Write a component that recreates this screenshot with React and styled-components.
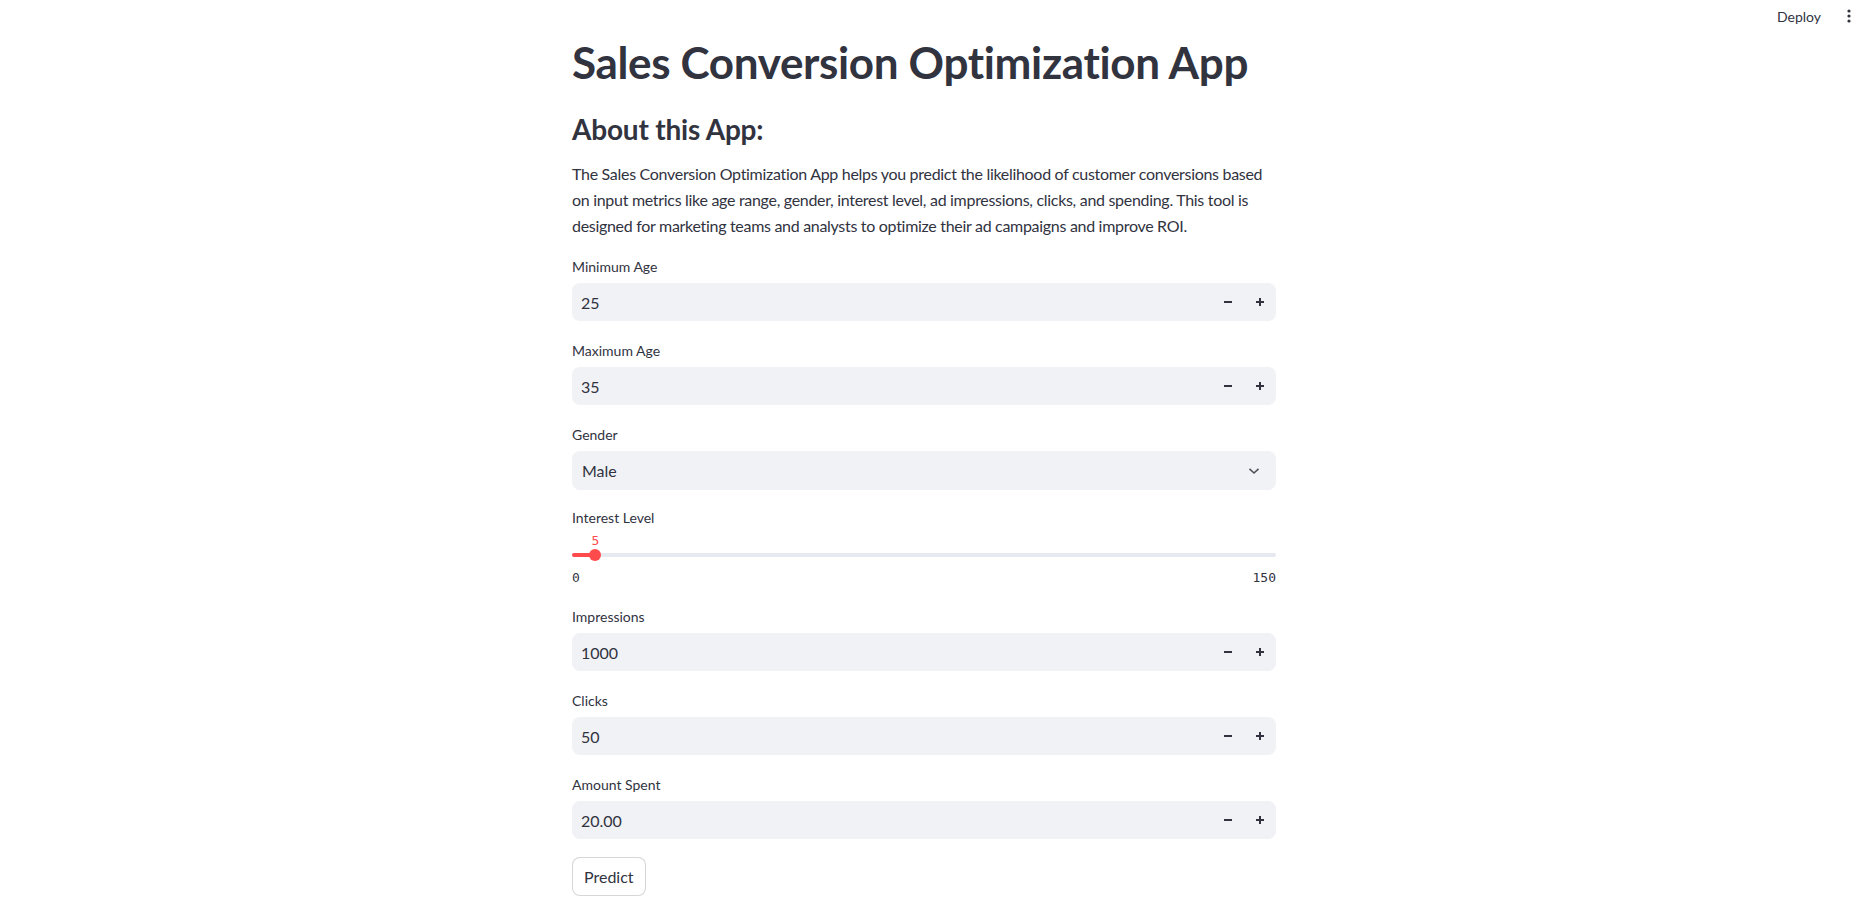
import React from "react";
import styled, { createGlobalStyle } from "styled-components";

const GlobalStyle = createGlobalStyle`
  body {
    margin: 0;
    background: #ffffff;
    color: #31333f;
    font-family: Lato, "Noto Sans", sans-serif;
  }
`;

const Header = styled.header`
  height: 32px;
  display: flex;
  justify-content: flex-end;
  align-items: center;
  padding-right: 19px;
`;

const Toolbar = styled.div`
  display: flex;
  align-items: center;
  gap: 8px;
`;

const DeployButton = styled.button`
  border: none;
  background: transparent;
  font-family: inherit;
  font-size: 14px;
  color: #31333f;
  padding: 0 12px;
  height: 28px;
  cursor: pointer;
`;

const MenuButton = styled.button`
  border: none;
  background: transparent;
  width: 16px;
  height: 28px;
  padding: 0;
  display: flex;
  align-items: center;
  justify-content: center;
  color: #31333f;
`;

const Main = styled.main`
  display: flex;
  justify-content: center;
  padding: 4px 28px 0 0;
`;

const Column = styled.div`
  width: 704px;
  display: flex;
  flex-direction: column;
`;

const Title = styled.h1`
  margin: 0;
  font-size: 44px;
  line-height: 53px;
  font-weight: 700;
  letter-spacing: -0.35px;
`;

const Subheader = styled.h3`
  margin: 23px 0 0;
  font-size: 28px;
  line-height: 34px;
  font-weight: 700;
  letter-spacing: -0.2px;
`;

const Paragraph = styled.p`
  margin: 15px 0 0;
  font-size: 16px;
  line-height: 26px;
  letter-spacing: -0.3px;
`;

const Form = styled.div`
  margin-top: 16px;
  display: flex;
  flex-direction: column;
  gap: 16px;
`;

const Field = styled.div`
  display: flex;
  flex-direction: column;
  gap: ${(p) => (p.$tight ? "0" : "4px")};
`;

const Label = styled.label`
  font-size: 14px;
  line-height: 24px;
  height: 24px;
`;

const NumberBox = styled.div`
  height: 38px;
  margin-bottom: 2px;
  background: #f0f2f6;
  border-radius: 8px;
  display: flex;
  align-items: center;
`;

const NumberValue = styled.div`
  flex: 1;
  padding-left: 9px;
  font-size: 16px;
`;

const StepButton = styled.button`
  width: 32px;
  height: 100%;
  border: none;
  background: transparent;
  padding: 0;
  display: flex;
  align-items: center;
  justify-content: center;
  color: #31333f;
`;

const SelectBox = styled.div`
  height: 39px;
  background: #f0f2f6;
  border-radius: 8px;
  display: flex;
  align-items: center;
  justify-content: space-between;
  padding: 0 16px 0 10px;
  font-size: 16px;
`;

const ValueRow = styled.div`
  position: relative;
  height: 16px;
  margin-top: 3px;
`;

const ThumbValue = styled.span`
  position: absolute;
  top: 0;
  transform: translateX(-50%);
  font-family: "DejaVu Sans Mono", monospace;
  font-size: 13px;
  line-height: 16px;
  color: #ff4b4b;
`;

const TrackWrap = styled.div`
  position: relative;
  height: 12px;
  display: flex;
  align-items: center;
`;

const Track = styled.div`
  width: 100%;
  height: 4px;
  border-radius: 2px;
  background: #e6e9ef;
  overflow: hidden;
`;

const TrackFill = styled.div`
  height: 100%;
  background: #ff4b4b;
`;

const Thumb = styled.div`
  position: absolute;
  top: 0;
  width: 12px;
  height: 12px;
  border-radius: 50%;
  background: #ff4b4b;
  transform: translateX(-50%);
`;

const Ticks = styled.div`
  margin-top: 9px;
  margin-bottom: 3px;
  display: flex;
  justify-content: space-between;
  font-family: "DejaVu Sans Mono", monospace;
  font-size: 13px;
  line-height: 16px;
`;

const PredictButton = styled.button`
  align-self: flex-start;
  height: 39px;
  padding: 0 11px;
  border: 1px solid rgba(49, 51, 63, 0.2);
  border-radius: 8px;
  background: #ffffff;
  font-family: inherit;
  font-size: 16px;
  color: #31333f;
  cursor: pointer;
`;

const MinusIcon = () => (
  <svg width="10" height="10" viewBox="0 0 10 10">
    <rect x="1" y="4" width="8" height="2" fill="currentColor" />
  </svg>
);

const PlusIcon = () => (
  <svg width="10" height="10" viewBox="0 0 10 10">
    <rect x="1" y="4" width="8" height="2" fill="currentColor" />
    <rect x="4" y="1" width="2" height="8" fill="currentColor" />
  </svg>
);

const ChevronIcon = () => (
  <svg width="12" height="8" viewBox="0 0 12 8">
    <path d="M1.5 1.8 L6 6 L10.5 1.8" fill="none" stroke="#50525c" strokeWidth="1.6" />
  </svg>
);

const KebabIcon = () => (
  <svg width="4" height="14" viewBox="0 0 4 14">
    <circle cx="2" cy="2" r="1.6" fill="currentColor" />
    <circle cx="2" cy="7" r="1.6" fill="currentColor" />
    <circle cx="2" cy="12" r="1.6" fill="currentColor" />
  </svg>
);

const NumberInput = ({ label, value }) => (
  <Field>
    <Label>{label}</Label>
    <NumberBox>
      <NumberValue>{value}</NumberValue>
      <StepButton aria-label="Decrement">
        <MinusIcon />
      </StepButton>
      <StepButton aria-label="Increment">
        <PlusIcon />
      </StepButton>
    </NumberBox>
  </Field>
);

const Slider = ({ label, value, min, max }) => {
  const pos = `${((value - min) / (max - min)) * 100}%`;
  return (
    <Field $tight>
      <Label>{label}</Label>
      <ValueRow>
        <ThumbValue style={{ left: pos }}>{value}</ThumbValue>
      </ValueRow>
      <TrackWrap>
        <Track>
          <TrackFill style={{ width: pos }} />
        </Track>
        <Thumb style={{ left: pos }} />
      </TrackWrap>
      <Ticks>
        <span>{min}</span>
        <span>{max}</span>
      </Ticks>
    </Field>
  );
};

export default function App() {
  return (
    <>
      <GlobalStyle />
      <Header>
        <Toolbar>
          <DeployButton>Deploy</DeployButton>
          <MenuButton aria-label="Main menu">
            <KebabIcon />
          </MenuButton>
        </Toolbar>
      </Header>
      <Main>
        <Column>
          <Title>Sales Conversion Optimization App</Title>
          <Subheader>About this App:</Subheader>
          <Paragraph>
            The Sales Conversion Optimization App helps you predict the likelihood of customer conversions based
            on input metrics like age range, gender, interest level, ad impressions, clicks, and spending. This tool is
            designed for marketing teams and analysts to optimize their ad campaigns and improve ROI.
          </Paragraph>
          <Form>
            <NumberInput label="Minimum Age" value="25" />
            <NumberInput label="Maximum Age" value="35" />
            <Field>
              <Label>Gender</Label>
              <SelectBox>
                <span>Male</span>
                <ChevronIcon />
              </SelectBox>
            </Field>
            <Slider label="Interest Level" value={5} min={0} max={150} />
            <NumberInput label="Impressions" value="1000" />
            <NumberInput label="Clicks" value="50" />
            <NumberInput label="Amount Spent" value="20.00" />
            <PredictButton>Predict</PredictButton>
          </Form>
        </Column>
      </Main>
    </>
  );
}
